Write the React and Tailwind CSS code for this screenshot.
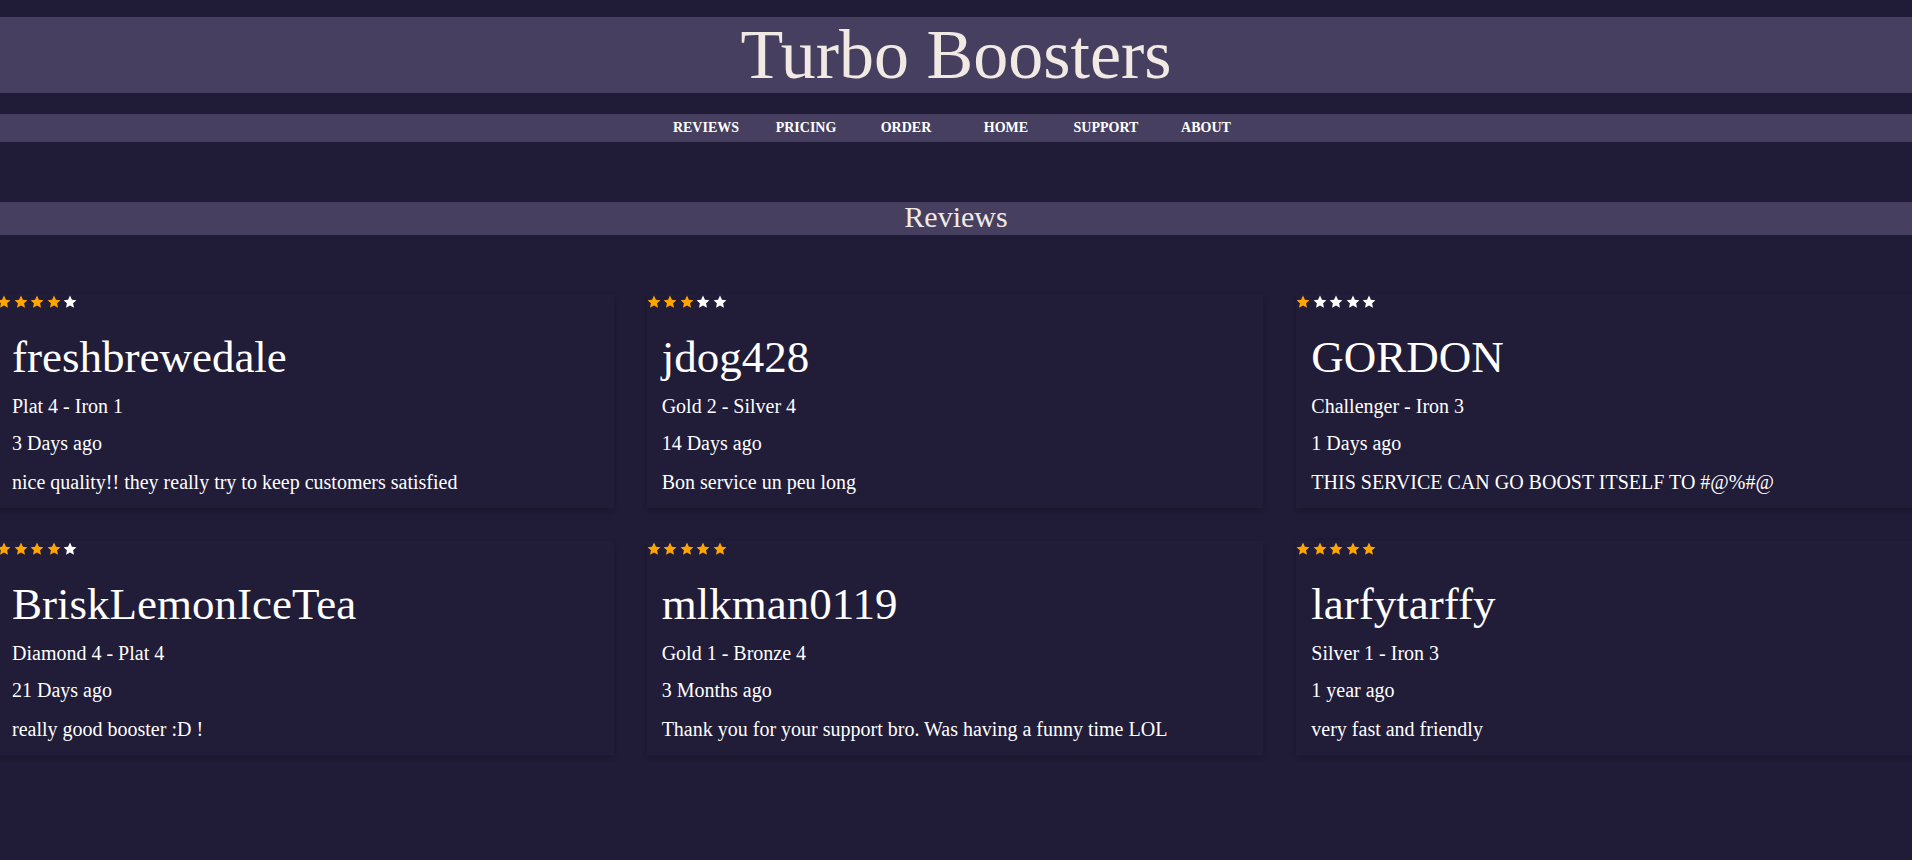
import React from 'react';

const REVIEWS = [
  { name: 'freshbrewedale', rank: 'Plat 4 - Iron 1', when: '3 Days ago', text: 'nice quality!! they really try to keep customers satisfied', stars: 4 },
  { name: 'jdog428', rank: 'Gold 2 - Silver 4', when: '14 Days ago', text: 'Bon service un peu long', stars: 3 },
  { name: 'GORDON', rank: 'Challenger - Iron 3', when: '1 Days ago', text: 'THIS SERVICE CAN GO BOOST ITSELF TO #@%#@', stars: 1 },
  { name: 'BriskLemonIceTea', rank: 'Diamond 4 - Plat 4', when: '21 Days ago', text: 'really good booster :D !', stars: 4 },
  { name: 'mlkman0119', rank: 'Gold 1 - Bronze 4', when: '3 Months ago', text: 'Thank you for your support bro. Was having a funny time LOL', stars: 5 },
  { name: 'larfytarffy', rank: 'Silver 1 - Iron 3', when: '1 year ago', text: 'very fast and friendly', stars: 5 },
];

const NAV = ['REVIEWS', 'PRICING', 'ORDER', 'HOME', 'SUPPORT', 'ABOUT'];

function Star({ on }) {
  return (
    <svg viewBox="0 0 24 24" className="w-[14px] h-[14px]" aria-hidden="true">
      <polygon
        points="12,1 15.3,8 23,8.9 17.3,14.2 18.8,22 12,18.1 5.2,22 6.7,14.2 1,8.9 8.7,8"
        fill={on ? '#ffa500' : '#ffffff'}
      />
    </svg>
  );
}

function ReviewCard({ review }) {
  return (
    <div className="bg-[#211c38] shadow-[0_3px_5px_rgba(0,0,0,0.14)] pb-[14px] text-white">
      <div className="flex items-center gap-[2.5px] h-[16px]">
        {[1, 2, 3, 4, 5].map((i) => (
          <Star key={i} on={i <= review.stars} />
        ))}
      </div>
      <div className="px-[15px]">
        <div className="mt-[21px] text-[45px] leading-[52px]">{review.name}</div>
        <div className="mt-[12px] text-[20px] leading-[23px]">{review.rank}</div>
        <div className="mt-[14px] text-[20px] leading-[23px]">{review.when}</div>
        <div className="mt-[16px] text-[20px] leading-[23px]">{review.text}</div>
      </div>
    </div>
  );
}

export default function App() {
  return (
    <div
      className="min-h-screen bg-[#201b36] pt-[17px] overflow-hidden"
      style={{ fontFamily: '"Liberation Serif", "Times New Roman", serif' }}
    >
      <header className="h-[76px] bg-[#463f5f] flex justify-center">
        <h1 className="text-[70px] leading-[76px] text-[#f1e9e4]">Turbo Boosters</h1>
      </header>

      <nav className="mt-[21px] h-[28px] bg-[#463f5f] flex justify-center">
        {NAV.map((item) => (
          <a key={item} className="w-[100px] text-center text-[14px] leading-[28px] font-bold text-white">
            {item}
          </a>
        ))}
      </nav>

      <section className="mt-[60px]">
        <h2 className="h-[33px] bg-[#463f5f] text-center text-[30px] leading-[30px] text-[#f1e9e4]">Reviews</h2>

        <div className="mt-[59px] -ml-[3px] -mr-[1px] grid grid-cols-3 gap-x-[33px] gap-y-[33px]">
          {REVIEWS.map((r) => (
            <ReviewCard key={r.name} review={r} />
          ))}
        </div>
      </section>
    </div>
  );
}
